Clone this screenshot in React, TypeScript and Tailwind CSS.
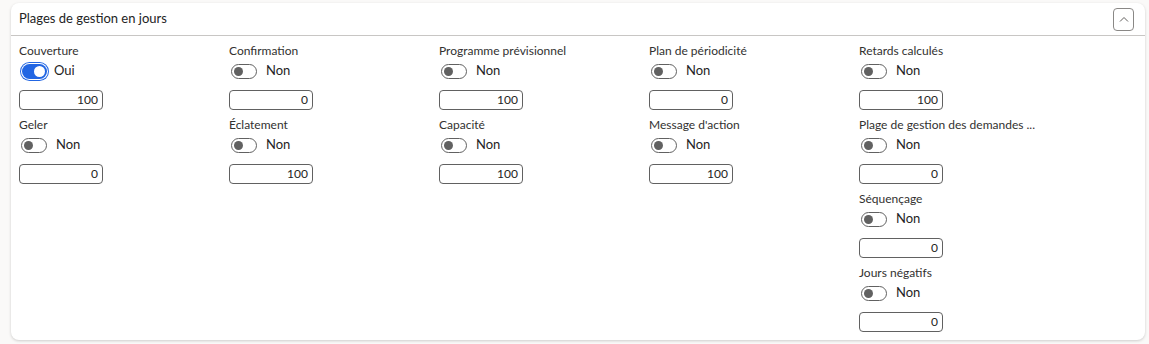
import React from "react";

type Field = { label: string; on?: boolean; value: string };

const columns: Field[][] = [
  [
    { label: "Couverture", on: true, value: "100" },
    { label: "Geler", value: "0" },
  ],
  [
    { label: "Confirmation", value: "0" },
    { label: "Éclatement", value: "100" },
  ],
  [
    { label: "Programme prévisionnel", value: "100" },
    { label: "Capacité", value: "100" },
  ],
  [
    { label: "Plan de périodicité", value: "0" },
    { label: "Message d'action", value: "100" },
  ],
  [
    { label: "Retards calculés", value: "100" },
    { label: "Plage de gestion des demandes ...", value: "0" },
    { label: "Séquençage", value: "0" },
    { label: "Jours négatifs", value: "0" },
  ],
];

function Toggle({ on }: { on?: boolean }) {
  if (on) {
    return (
      <div className="ml-[3px] w-[25px] h-[15px] rounded-full bg-[#2266e3] ring-1 ring-[#2266e3] ring-offset-1 flex items-center justify-end pr-[2px]">
        <div className="w-[11px] h-[11px] rounded-full bg-white" />
      </div>
    );
  }
  return (
    <div className="ml-[2px] w-[26px] h-[15px] rounded-full border border-[#616161] flex items-center pl-[2px]">
      <div className="w-[9px] h-[9px] rounded-full bg-[#616161]" />
    </div>
  );
}

function FieldBox({ f }: { f: Field }) {
  return (
    <div className="flex flex-col items-start">
      <div className="h-[16px] leading-[16px] text-[12px] text-[#323130]">{f.label}</div>
      <div className={`flex items-center mt-[2px] h-[20px] ${f.on ? "gap-[7px]" : "gap-[9px]"}`}>
        <Toggle on={f.on} />
        <span className="text-[13px] text-[#242424]">{f.on ? "Oui" : "Non"}</span>
      </div>
      <div className="mt-[9px] w-[84px] h-[20px] border border-[#616161] rounded-[4px] flex items-center justify-end pr-[4px] text-[12px] text-[#242424] bg-white">
        {f.value}
      </div>
      <div className="h-[7px]" />
    </div>
  );
}

export default function App() {
  return (
    <div
      className="w-[1149px] h-[344px] bg-[#faf9f8] pl-[11px] pr-[4px] pt-[3px] pb-[4px]"
      style={{ fontFamily: '"Segoe UI", Lato, "Noto Sans", sans-serif' }}
    >
      <div className="h-full bg-white rounded-[8px] shadow-[0_1px_3px_rgba(0,0,0,0.18)] flex flex-col">
        <div className="h-[33px] border-b border-[#c8c6c4] flex items-center justify-between pl-[8px] pr-[11px]">
          <span className="text-[13px] text-[#242424]">Plages de gestion en jours</span>
          <button className="w-[21px] h-[23px] border border-[#8a8886] rounded-[4px] flex items-center justify-center bg-white">
            <svg width="10" height="6" viewBox="0 0 10 6" fill="none">
              <path d="M1 5.5L5 1.5L9 5.5" stroke="#605e5c" strokeWidth="1" />
            </svg>
          </button>
        </div>
        <div className="flex pl-[8px] pt-[7px]">
          {columns.map((col, i) => (
            <div key={i} className="w-[210px] flex flex-col">
              {col.map((f) => (
                <FieldBox key={f.label} f={f} />
              ))}
            </div>
          ))}
        </div>
      </div>
    </div>
  );
}
